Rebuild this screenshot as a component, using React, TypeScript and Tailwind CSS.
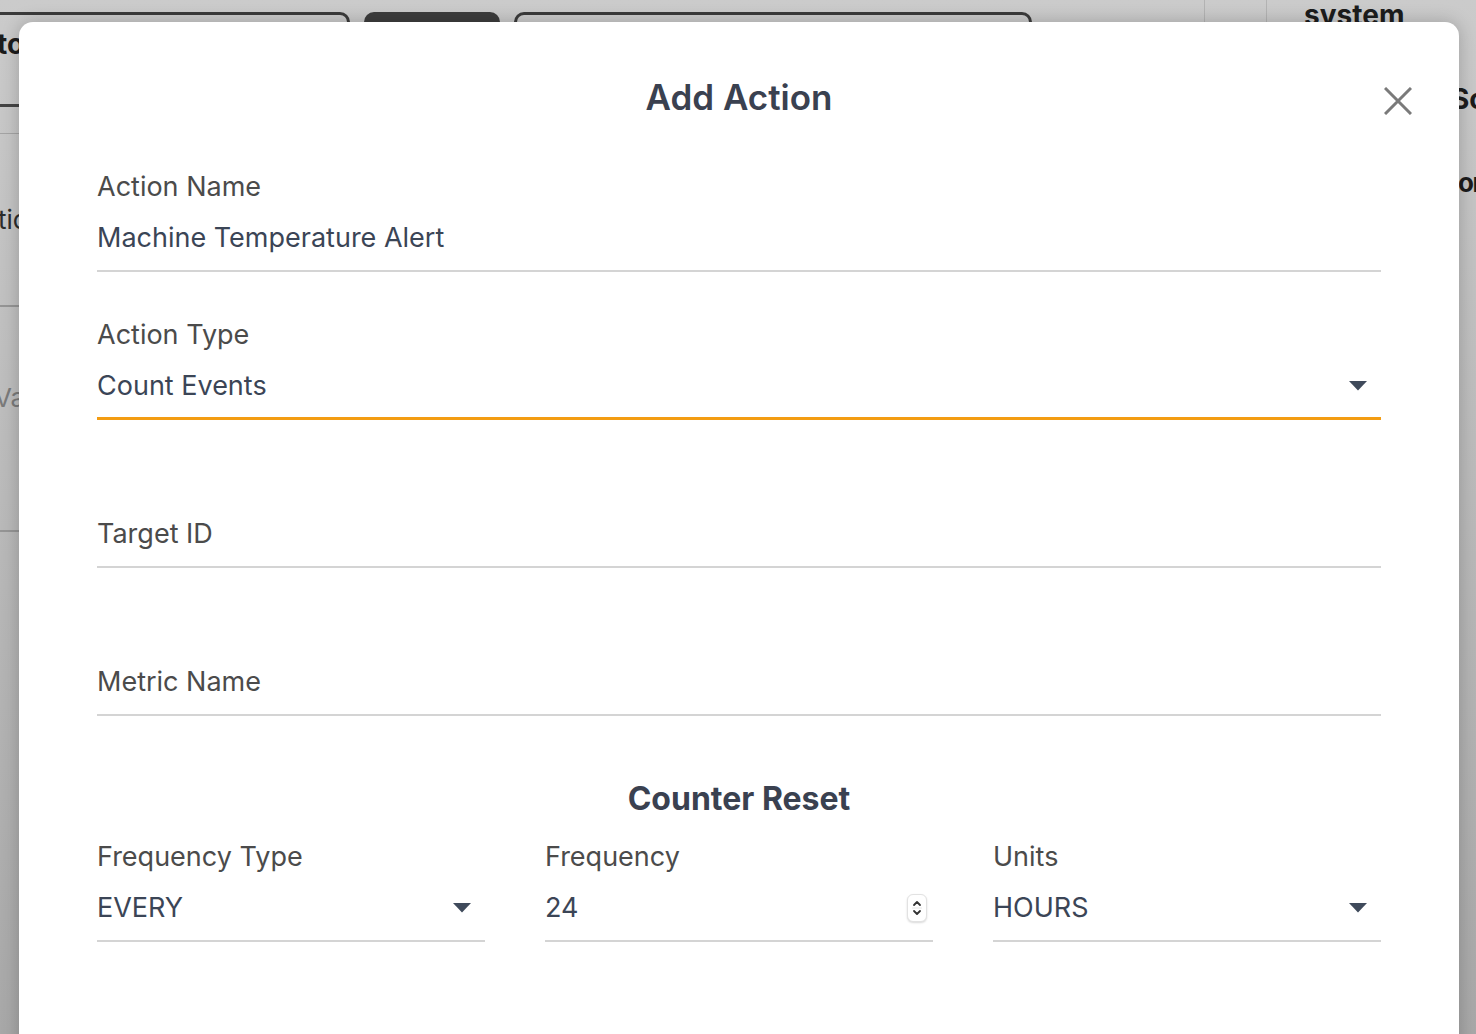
import type { ReactNode } from 'react'

const FONT = "font-['Inter','Noto_Sans',sans-serif]"

function Caret() {
  return (
    <svg width="18" height="10" viewBox="0 0 18 10" className="shrink-0">
      <path d="M0 0h18L9 9.5z" fill="#3f4a5b" />
    </svg>
  )
}

function Spinner() {
  return (
    <div className="mr-[6px] flex h-[28px] w-[20px] flex-col items-center justify-center rounded-[6px] border border-[#e2e2e2] bg-white shadow-[0_1px_2px_rgba(0,0,0,0.15)]">
      <svg width="12" height="22" viewBox="0 0 12 22">
        <path d="M3 8l3-3 3 3" fill="none" stroke="#333" strokeWidth="1.8" strokeLinecap="round" strokeLinejoin="round" />
        <path d="M1 11h10" stroke="#e6e6e6" strokeWidth="1" />
        <path d="M3 14l3 3 3-3" fill="none" stroke="#333" strokeWidth="1.8" strokeLinecap="round" strokeLinejoin="round" />
      </svg>
    </div>
  )
}

interface FieldProps {
  label: string
  value?: string
  select?: boolean
  focused?: boolean
  trailing?: ReactNode
}

function Field({ label, value, select, focused, trailing }: FieldProps) {
  const line = focused
    ? 'border-b-[3px] border-[#f39c12] pb-[15px]'
    : 'border-b-2 border-[#d4d4d4] pb-[16px]'

  return (
    <div className={line}>
      <div className={`text-[27px] leading-[32px] text-[#4b4b4b] ${value ? '' : 'invisible'}`}>{label}</div>
      <div className="mt-[19px] flex h-[32px] items-center justify-between">
        {value ? (
          <span className="text-[27px] leading-[32px] text-[#3b4556]">{value}</span>
        ) : (
          <span className="text-[27px] leading-[32px] text-[#4b4b4b]">{label}</span>
        )}
        {select && (
          <span className="mr-[14px]">
            <Caret />
          </span>
        )}
        {trailing}
      </div>
    </div>
  )
}

function PageBehind() {
  return (
    <div className="flex h-full flex-col">
      {/* tab strip */}
      <div className="flex h-[22px] items-end">
        <div className="h-[10px] w-[350px] rounded-tr-[10px] border-r-[3px] border-t-[3px] border-[#3b3b3b]" />
        <div className="ml-[14px] h-[10px] w-[136px] rounded-t-[10px] bg-[#3d3d3d]" />
        <div className="ml-[14px] h-[10px] w-[518px] rounded-t-[10px] border-x-[3px] border-t-[3px] border-[#3b3b3b]" />
        <div className="ml-[172px] h-full w-px bg-[#b3b3b3]" />
        <div className="ml-[61px] h-full w-px bg-[#b3b3b3]" />
        <div className="ml-[37px] self-start text-[28px] font-bold leading-[30px] text-[#1c1c1c]">system</div>
      </div>
      <div className="flex flex-1 justify-between">
        {/* left column */}
        <div className="flex w-[19px] flex-col overflow-hidden">
          <div className="mt-[6px] -ml-[3px] text-[28px] font-bold leading-[32px] text-[#1c1c1c]">to</div>
          <div className="mt-[44px] h-[3px] w-full bg-[#444]" />
          <div className="mt-[26px] h-px w-full bg-[#a4a4a4]" />
          <div className="mt-[70px] -ml-[2px] text-[26px] leading-[32px] text-[#2c2c2c]">tic</div>
          <div className="mt-[69px] h-[2px] w-full bg-[#959595]" />
          <div className="mt-[75px] -ml-[6px] text-[26px] leading-[32px] text-[#7a7a7a]">Va</div>
          <div className="mt-[116px] h-[2px] w-full bg-[#959595]" />
        </div>
        {/* right column */}
        <div className="flex w-[17px] flex-col overflow-hidden">
          <div className="mt-[60px] -ml-[8px] text-[28px] font-bold leading-[34px] text-[#1c1c1c]">Sc</div>
          <div className="mt-[50px] -ml-[1px] whitespace-nowrap text-[26px] font-bold leading-[34px] tracking-[-1.5px] text-[#1c1c1c]">or</div>
        </div>
      </div>
    </div>
  )
}

export default function App() {
  return (
    <div className={`relative h-[1034px] w-[1476px] overflow-hidden bg-gradient-to-b from-[#cbcbcb] to-[#a8a8a8] ${FONT}`}>
      <PageBehind />

      <div className="absolute left-[19px] top-[22px] bottom-[-40px] w-[1440px] rounded-[14px] bg-white px-[78px] pt-[55px] shadow-[0_0_18px_rgba(0,0,0,0.22)]">
        <div className="relative">
          <h1 className="text-center text-[35px] font-semibold leading-[40px] text-[#3a4150]">Add Action</h1>
          <button className="absolute right-[-31px] top-[10px] text-[#7a7a7a]" aria-label="Close">
            <svg width="28" height="28" viewBox="0 0 28 28">
              <path d="M1 1l26 26M27 1L1 27" stroke="currentColor" strokeWidth="3" />
            </svg>
          </button>
        </div>

        <div className="mt-[54px] flex flex-col gap-[47px]">
          <Field label="Action Name" value="Machine Temperature Alert" />
          <Field label="Action Type" value="Count Events" select focused />
          <Field label="Target ID" />
          <Field label="Metric Name" />
        </div>

        <h2 className="mt-[65px] text-center text-[32px] font-bold leading-[36px] text-[#3a4150]">Counter Reset</h2>

        <div className="mt-[24px] grid grid-cols-3 gap-x-[60px]">
          <Field label="Frequency Type" value="EVERY" select />
          <Field label="Frequency" value="24" trailing={<Spinner />} />
          <Field label="Units" value="HOURS" select />
        </div>
      </div>
    </div>
  )
}
